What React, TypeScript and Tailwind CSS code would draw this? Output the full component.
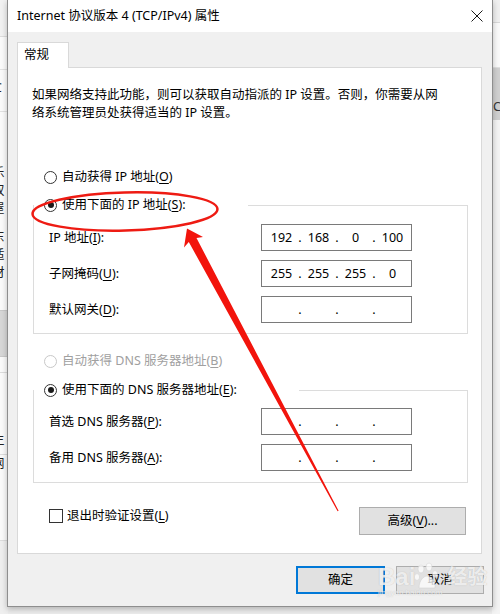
import { Fragment } from 'react';

const u = (c: string) => <span className="underline underline-offset-2">{c}</span>;

function Radio({ checked = false, disabled = false }: { checked?: boolean; disabled?: boolean }) {
  return (
    <span
      className={`flex h-[13px] w-[13px] shrink-0 items-center justify-center rounded-full border bg-white ${
        disabled ? 'border-[#c8c8c8]' : 'border-[#333333]'
      }`}
    >
      {checked && <span className="h-[6px] w-[6px] rounded-full bg-[#1a1a1a]" />}
    </span>
  );
}

function IpBox({ parts = ['', '', '', ''] }: { parts?: string[] }) {
  return (
    <div className="flex h-[27px] w-[151px] shrink-0 items-center border border-[#7a7a7a] bg-white pl-[3px]">
      {parts.map((p, i) => (
        <Fragment key={i}>
          <span className="w-[33px] text-center">{p}</span>
          {i < 3 && <span className="w-[4px] text-center">.</span>}
        </Fragment>
      ))}
    </div>
  );
}

function Field({ label, parts }: { label: React.ReactNode; parts?: string[] }) {
  return (
    <div className="flex items-center">
      <span className="w-[212px]">{label}</span>
      <IpBox parts={parts} />
    </div>
  );
}

function Group({ title, children, top }: { title: React.ReactNode; children: React.ReactNode; top: string }) {
  return (
    <fieldset className={`ml-[15px] w-[435px] border border-[#dcdcdc] ${top}`}>
      <legend className="flex items-center gap-[5px] pl-[10px] pr-[62px]">
        <Radio checked />
        <span>{title}</span>
      </legend>
      {children}
    </fieldset>
  );
}

function BackdropLeft() {
  return (
    <div className="absolute left-0 top-0 flex h-[614px] w-[8px] flex-col overflow-hidden bg-[#fbfbfb] text-[12.5px] leading-[18px] text-[#222]">
      <div className="h-[37px] border-b border-[#dddddd] bg-[#f2f2f2]" />
      <div className="h-[33px] border-b border-[#e2e2e2]" />
      <div className="-ml-[6px] h-[42px] border-b border-[#e2e2e2] pt-[9px]">C</div>
      <div className="-ml-[8px] h-[198px] pt-[52px]">
        <div>乐</div>
        <div>双</div>
        <div>屋</div>
        <div className="mt-[10px]">东</div>
        <div>适</div>
        <div>材</div>
      </div>
      <div className="h-[47px] border-y border-[#c9c9c9] bg-[#d7d7d7]" />
      <div className="h-[16px] border-b border-[#dddddd]" />
      <div className="-ml-[8px] h-[82px] border-b border-[#dddddd] pt-[58px]">生</div>
      <div className="-ml-[8px] h-[86px] border-b border-[#dddddd]">网</div>
      <div className="flex-1 bg-[#efefef]" />
    </div>
  );
}

function BackdropRight() {
  return (
    <div className="absolute right-0 top-0 flex h-[614px] w-[8px] flex-col overflow-hidden bg-[#fafafa] text-[12.5px] leading-[18px] text-[#333]">
      <div className="h-[23px] border-b border-[#d8d8d8] bg-[#f0f0f0]" />
      <div className="h-[45px] border-b border-[#e0e0e0]" />
      <div className="h-[52px] bg-[#d0d0d0] pl-[1px] pt-[30px]">Co</div>
      <div className="flex-1 bg-[#f4f4f4]" />
    </div>
  );
}

function Watermark() {
  return (
    <div className="pointer-events-none absolute left-[378px] top-[560px] flex flex-col text-white/75 [text-shadow:0_0_1px_rgba(150,150,150,0.6)]">
      <div className="flex items-center">
        <span className="text-[24px] font-bold leading-[34px] font-['Liberation_Sans',sans-serif]">Bai</span>
        <svg width="30" height="30" viewBox="0 0 30 30" className="-ml-[2px] opacity-75">
          <g fill="#ffffff" stroke="#cfcfcf" strokeWidth="0.6">
            <ellipse cx="8" cy="7" rx="3" ry="4" />
            <ellipse cx="16" cy="5" rx="3" ry="4" />
            <ellipse cx="4" cy="15" rx="2.6" ry="3.4" />
            <ellipse cx="22" cy="12" rx="2.6" ry="3.4" />
            <path d="M6 26 C6 18 11 14 14 14 C18 14 23 19 22 26 Z" />
          </g>
        </svg>
        <span className="ml-[4px] text-[20px] font-bold leading-[34px]">经验</span>
      </div>
      <span className="-mt-[6px] text-[8px] leading-[10px] font-['Liberation_Sans',sans-serif]">jingyan.baidu.com</span>
    </div>
  );
}

function Annotation() {
  return (
    <svg className="pointer-events-none absolute inset-0" width="500" height="614" viewBox="0 0 500 614">
      <ellipse cx="125" cy="211.5" rx="92.5" ry="19" fill="none" stroke="#ee1b13" strokeWidth="2.5" transform="rotate(-1.5 125 211.5)" />
      <polygon
        points="187,228.5 203,237 196.5,238 338.6,510.8 337.6,511.3 188.8,242 184,247.5"
        fill="#f2140c"
      />
    </svg>
  );
}

export default function App() {
  return (
    <div className="relative h-[614px] w-[500px] overflow-hidden bg-[#ececec] text-[12.5px] leading-[18px] text-black font-['Noto_Sans','Noto_Sans_CJK_SC',sans-serif]">
      <BackdropLeft />
      <BackdropRight />

      <div className="absolute left-[7px] top-0 flex h-[607px] w-[486px] flex-col border-x border-b border-[#8e8e8e] bg-[#f0f0f0] shadow-[0_2px_6px_rgba(0,0,0,0.25)]">
        {/* title bar */}
        <div className="flex h-[32px] items-center justify-between bg-white pl-[9px] pr-[9px]">
          <span>Internet 协议版本 4 (TCP/IPv4) 属性</span>
          <svg width="12" height="12" viewBox="0 0 12 12">
            <path d="M0.5 0.5 L11.5 11.5 M11.5 0.5 L0.5 11.5" stroke="#1a1a1a" strokeWidth="1" fill="none" />
          </svg>
        </div>

        {/* tab */}
        <div className="relative z-10 ml-[9px] mt-[10px] -mb-px flex h-[26px] w-[52px] items-start border-x border-t border-[#d9d9d9] bg-white pl-[6px] pt-[3px]">
          常规
        </div>

        {/* panel */}
        <div className="ml-[9px] flex w-[465px] flex-col border border-[#d9d9d9] bg-white pb-[18px]">
          <p className="ml-[14px] mt-[18px] w-[410px]">
            如果网络支持此功能，则可以获取自动指派的 IP 设置。否则，你需要从网络系统管理员处获得适当的 IP 设置。
          </p>

          <div className="ml-[26px] mt-[46px] flex items-center gap-[5px]">
            <Radio />
            <span>自动获得 IP 地址({u('O')})</span>
          </div>

          <Group title={<>使用下面的 IP 地址({u('S')}):</>} top="mt-[10px]">
            <div className="flex flex-col gap-[9px] px-[15px] pb-[10px] pt-[10px]">
              <Field label={<>IP 地址({u('I')}):</>} parts={['192', '168', '0', '100']} />
              <Field label={<>子网掩码({u('U')}):</>} parts={['255', '255', '255', '0']} />
              <Field label={<>默认网关({u('D')}):</>} />
            </div>
          </Group>

          <div className="ml-[26px] mt-[18px] flex items-center gap-[5px] text-[#a0a0a0]">
            <Radio disabled />
            <span>自动获得 DNS 服务器地址({u('B')})</span>
          </div>

          <Group title={<>使用下面的 DNS 服务器地址({u('E')}):</>} top="mt-[11px]">
            <div className="flex flex-col gap-[9px] px-[15px] pb-[11px] pt-[9px]">
              <Field label={<>首选 DNS 服务器({u('P')}):</>} />
              <Field label={<>备用 DNS 服务器({u('A')}):</>} />
            </div>
          </Group>

          <div className="mt-[24px] flex items-start justify-between pl-[31px] pr-[15px]">
            <div className="flex items-center gap-[4px]">
              <span className="h-[14px] w-[14px] border border-[#333333] bg-white" />
              <span>退出时验证设置({u('L')})</span>
            </div>
            <button className="h-[28px] w-[107px] border border-[#adadad] bg-[#e1e1e1]">
              高级({u('V')})...
            </button>
          </div>
        </div>

        {/* buttons */}
        <div className="mt-[12px] flex justify-end gap-[11px] pr-[8px]">
          <button className="h-[28px] w-[89px] border-2 border-[#0078d7] bg-[#e1e1e1]">确定</button>
          <button className="h-[28px] w-[88px] border border-[#adadad] bg-[#e1e1e1]">取消</button>
        </div>
      </div>

      <Watermark />
      <Annotation />
    </div>
  );
}
